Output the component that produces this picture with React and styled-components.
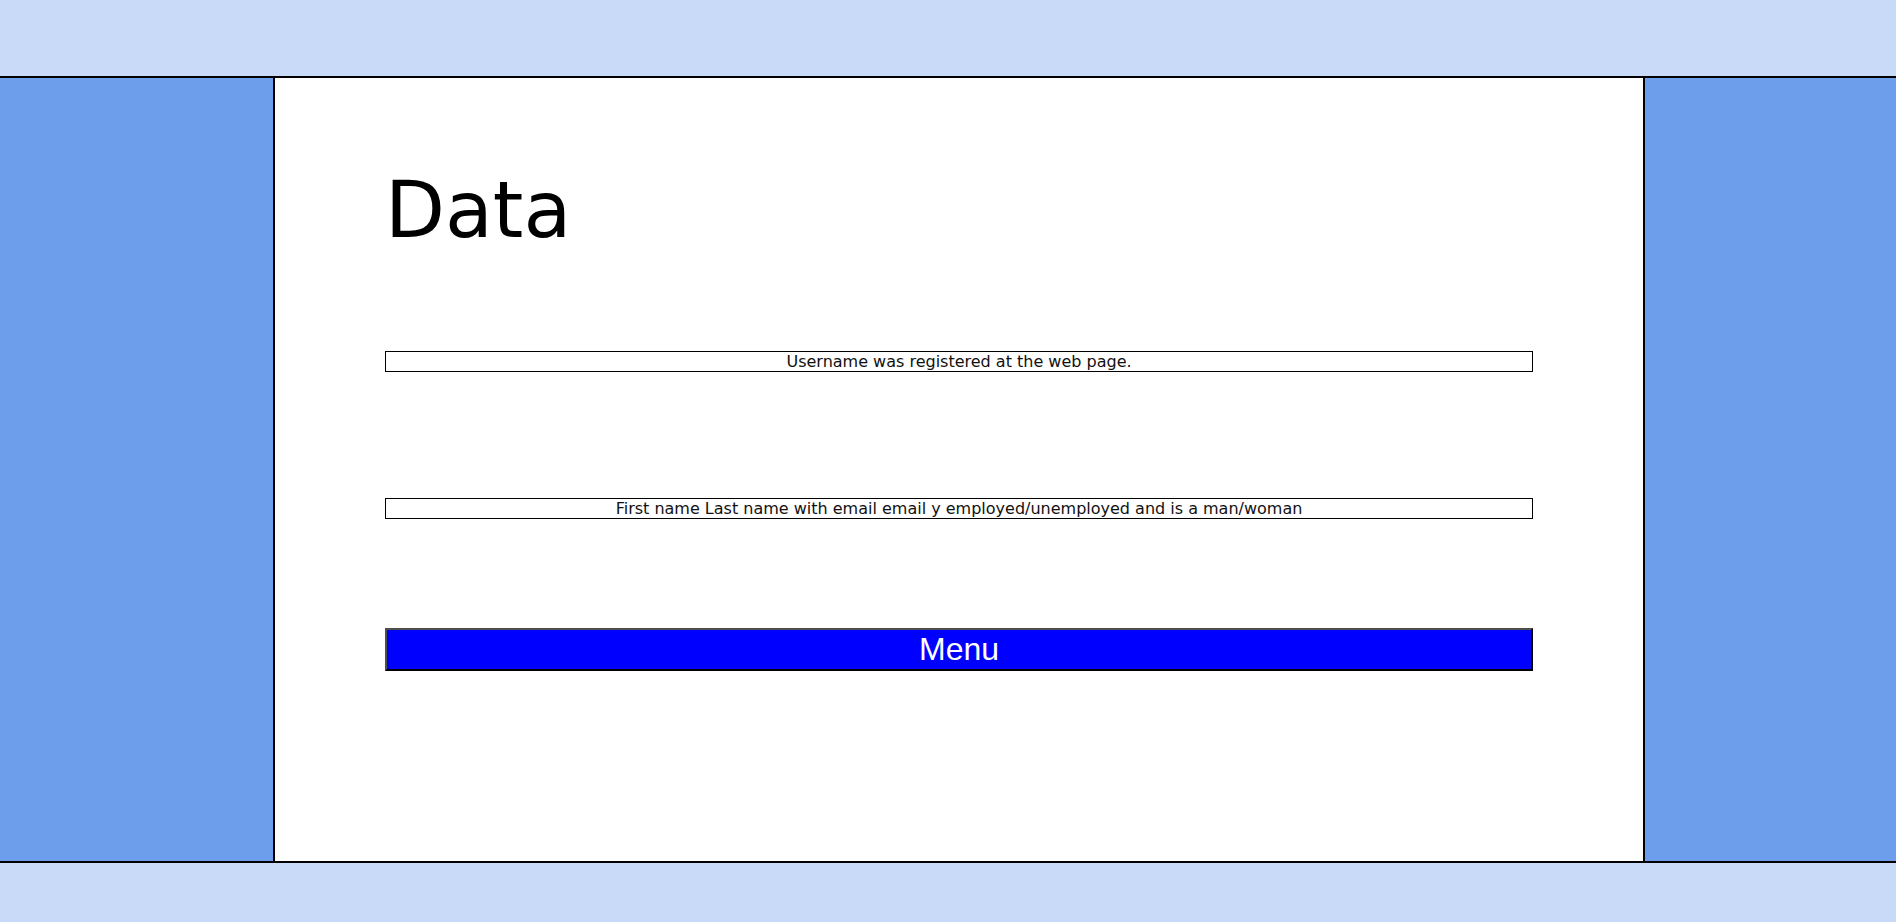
import React from 'react';
import styled, { createGlobalStyle } from 'styled-components';

const GlobalStyle = createGlobalStyle`
  html, body {
    margin: 0;
    padding: 0;
  }
  body {
    font-family: "DejaVu Sans", Verdana, sans-serif;
  }
`;

const Page = styled.div`
  display: flex;
  flex-direction: column;
  height: 100vh;
  width: 100%;
`;

const Band = styled.div`
  height: ${(p) => p.height}px;
  background-color: #c9daf8;
  flex-shrink: 0;
`;

const Middle = styled.div`
  display: flex;
  flex: 1;
  border-top: 2px solid #000;
  border-bottom: 2px solid #000;
`;

const Side = styled.div`
  width: ${(p) => p.width}px;
  background-color: #6d9eeb;
  flex-shrink: 0;
`;

const Main = styled.main`
  flex: 1;
  background-color: #fff;
  border-left: 2px solid #000;
  border-right: 2px solid #000;
  padding: 87px 110px 0;
  display: flex;
  flex-direction: column;
`;

const Title = styled.h1`
  margin: 0;
  font-family: "DejaVu Sans", Verdana, sans-serif;
  font-size: 78px;
  font-weight: normal;
  color: #000;
`;

const InfoBox = styled.div`
  margin-top: ${(p) => p.top}px;
  border: 1px solid #000;
  text-align: center;
  font-size: 16px;
  color: #111;
`;

const MenuButton = styled.button`
  margin-top: ${(p) => p.top}px;
  width: 100%;
  height: 43px;
  background-color: #0000ff;
  color: #fff;
  font-family: "Liberation Sans", Arial, sans-serif;
  font-size: 32px;
  padding: 1px 6px;
  border-width: 2px;
  border-style: solid;
  border-color: #4f4f4f #000 #000 #4f4f4f;
  cursor: pointer;
`;

const App = () => {
    return (
        <Page>
            <GlobalStyle />
            <Band height={76} />
            <Middle>
                <Side width={273} />
                <Main>
                    <Title>Data</Title>
                    <InfoBox top={96}>Username was registered at the web page.</InfoBox>
                    <InfoBox top={126}>First name Last name with email email y employed/unemployed and is a man/woman</InfoBox>
                    <MenuButton top={109}>Menu</MenuButton>
                </Main>
                <Side width={251} />
            </Middle>
            <Band height={59} />
        </Page>
    );
};

export default App;
